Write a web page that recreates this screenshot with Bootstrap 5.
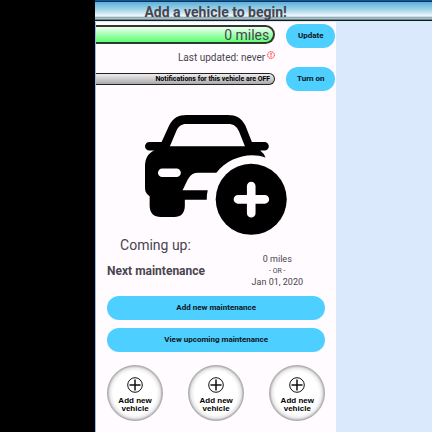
<!DOCTYPE html>
<html lang="en">
<head>
<meta charset="utf-8">
<meta name="viewport" content="width=device-width, initial-scale=1">
<title>Vehicle maintenance</title>
<link href="https://cdn.jsdelivr.net/npm/bootstrap@5.3.0/dist/css/bootstrap.min.css" rel="stylesheet">
<style>
body{font-family:Roboto,"Liberation Sans",sans-serif;background:#dbe9fc;color:#49454f;font-size:10px;line-height:12px}
.side{width:22%;background:#000}
.screen{width:71.6%;background:#fffbff;border-left:1px solid #8dbcf8}
.topbar{height:22px;border-top:1px solid #0b56a5;background:linear-gradient(#10334d 0 1px,#5db1d8 1px,#a5d5ea 9px,#f0f9fc 15px,#7095a0 17px,#dce9ee 18px,#0c1d25 19px 20px,#dce9ee 20px)}
.topbar h1{width:71.6%;font-size:14px;line-height:22px;font-weight:700;color:#49454f}
.readings{width:75%;padding:3px 1px 0 0}
.miles,.notice{border:1px solid #222;border-left:0}
.miles{height:19px;border-width:2px;border-color:#2b3a2d;border-radius:0 10px 10px 0;background:linear-gradient(#f4fff5,#aaffb5 45%,#5cff72);font-size:14px;line-height:16px;padding-right:4px}
.updated{height:29px;padding-top:8px}
.updated svg{margin:-1px 0 0 2px}
.notice{height:12px;border-radius:0 6px 6px 0;background:linear-gradient(#eee,#aaa);font-size:7px;line-height:11px;padding-right:4px;color:#000;font-weight:700}
.pill{--bs-btn-bg:#4dcfff;--bs-btn-color:#0c1419;--bs-btn-hover-bg:#35c3f7;--bs-btn-border-width:0;--bs-btn-font-size:8px;--bs-btn-font-weight:700;--bs-btn-line-height:12px;--bs-btn-padding-y:6px;--bs-btn-padding-x:0;--bs-btn-border-radius:12px}
.side-actions{width:50px;gap:19px;padding:2px 1px 0 0}
.car{width:59%;margin-top:24px}
.upcoming{padding:0 11px}
.upcoming h2{font-size:14px;line-height:18px;font-weight:400;margin:1px 0 0 13px}
.upcoming h3{font-size:12px;line-height:16px;font-weight:700}
.due{width:96px;font-size:9px;line-height:11px}
.due small{font-size:7px}
.round{width:56px;height:56px;border:1px solid #aaa;background:radial-gradient(circle closest-side,#fff 80%,#ececec 92%,#bcbcbc);font:700 8px/8px "Liberation Sans",Arial,sans-serif;color:#000;padding:4px 0 0}
.vehicles{margin-top:13px}
</style>
<script src="https://cdn.jsdelivr.net/npm/bootstrap@5.3.0/dist/js/bootstrap.bundle.min.js" defer></script>
</head>
<body>
<div class="d-flex min-vh-100">
  <aside class="side flex-shrink-0"></aside>
  <div class="flex-grow-1 d-flex flex-column">
    <header class="topbar"><h1 class="m-0 text-center text-nowrap">Add a vehicle to begin!</h1></header>
    <main class="screen flex-grow-1 d-flex flex-column">
      <section class="d-flex justify-content-between">
        <div class="readings">
          <div class="miles text-end">0 miles</div>
          <div class="updated d-flex justify-content-end">Last updated: never
            <svg width="8" height="8" viewBox="0 0 16 16" fill="none" stroke="#f22" stroke-width="2"><circle cx="8" cy="8" r="6.7" stroke-dasharray="3 1"/><path d="M8 3.500v5.500M8 10.500v2"/></svg>
          </div>
          <div class="notice text-end text-nowrap">Notifications for this vehicle are OFF</div>
        </div>
        <div class="side-actions d-flex flex-column">
          <button type="button" class="btn pill">Update</button>
          <button type="button" class="btn pill">Turn on</button>
        </div>
      </section>
      <svg class="car mx-auto d-block" viewBox="30 45 427 362" role="img" aria-label="Add a vehicle">
        <path fill-rule="evenodd" d="M80 126L103 76C115 53 131 45 155 45H280C304 45 320 53 332 76L352 126H390A13 13 0 0 1 390 152H377Q388 160 393 173C340 155 280 175 245 219H190C163 219 160 240 143 272H219Q216 284 216 300H150V318C150 340 138 352 118 352H78C57 352 44 340 44 318V290C33 282 30 275 30 262V200C30 175 40 160 58 152H43A13 13 0 0 1 43 126ZM105 139H331L313 94C307 80 298 72 280 72H155C139 72 131 79 125 92ZM82 206A13 13 0 0 0 82 232H125A13 13 0 0 0 125 206Z"/>
        <circle cx="350" cy="299" r="107"/>
        <path d="M350 259V341M310 299H391" stroke="#fffbff" stroke-width="26" stroke-linecap="round"/>
      </svg>
      <section class="upcoming">
        <h2>Coming up:</h2>
        <div class="d-flex justify-content-between align-items-center">
          <h3 class="m-0 text-nowrap">Next maintenance</h3>
          <div class="due text-center"><div>0 miles</div><div><small>- OR -</small></div><div>Jan 01, 2020</div></div>
        </div>
        <div class="d-grid gap-2 mt-2">
          <button type="button" class="btn pill">Add new maintenance</button>
          <button type="button" class="btn pill">View upcoming maintenance</button>
        </div>
        <div class="vehicles d-flex justify-content-between">
          <button type="button" class="round rounded-circle"><svg class="d-block mx-auto mb-1" width="16" height="16" viewBox="0 0 16 16" fill="none" stroke="#111"><circle cx="8" cy="8" r="7.300"/><path d="M8 2.500v11M2.500 8h11" stroke-width="1.500"/></svg>Add new<br>vehicle</button>
          <button type="button" class="round rounded-circle"><svg class="d-block mx-auto mb-1" width="16" height="16" viewBox="0 0 16 16" fill="none" stroke="#111"><circle cx="8" cy="8" r="7.300"/><path d="M8 2.500v11M2.500 8h11" stroke-width="1.500"/></svg>Add new<br>vehicle</button>
          <button type="button" class="round rounded-circle"><svg class="d-block mx-auto mb-1" width="16" height="16" viewBox="0 0 16 16" fill="none" stroke="#111"><circle cx="8" cy="8" r="7.300"/><path d="M8 2.500v11M2.500 8h11" stroke-width="1.500"/></svg>Add new<br>vehicle</button>
        </div>
      </section>
    </main>
  </div>
</div>
</body>
</html>
